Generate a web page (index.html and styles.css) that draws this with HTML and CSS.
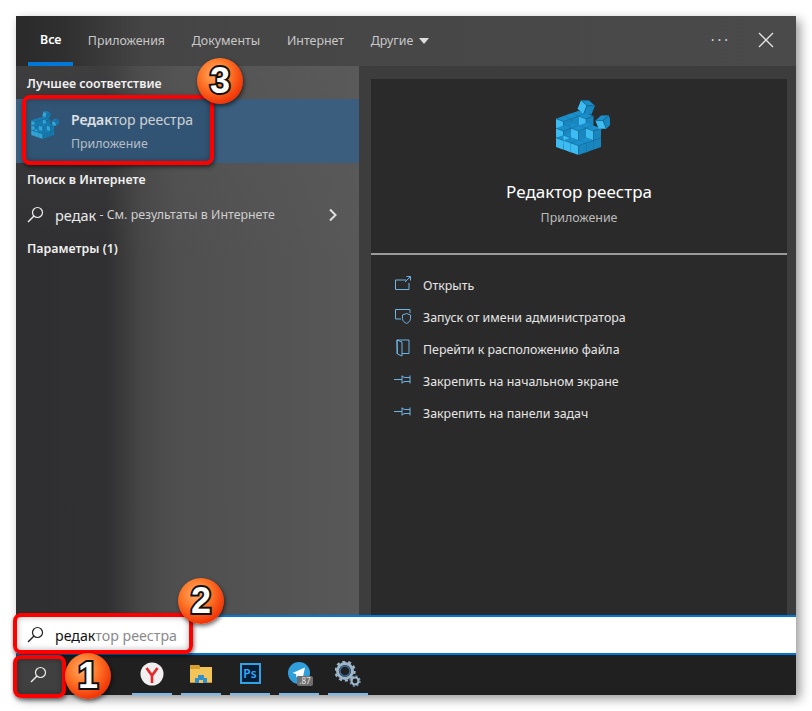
FILE: index.html
```html
<!DOCTYPE html>
<html lang="ru">
<head>
<meta charset="utf-8">
<title>Поиск</title>
<link rel="stylesheet" href="styles.css">
</head>
<body>
<svg class="defs" width="0" height="0" aria-hidden="true">
  <defs>
    <g id="cube">
      <polygon points="0,-2.8 7.5,0 0,2.8 -7.5,0" fill="#1b8fcb"/>
      <polygon points="-7.5,0 0,2.8 0,12.1 -7.5,9.3" fill="#3dbcf2"/>
      <polygon points="7.5,0 0,2.8 0,12.1 7.5,9.3" fill="#1a86bf"/>
      <path d="M-7.5 0 0 2.8 7.5 0M0 2.8V12.1" fill="none" stroke="#0d5f8c" stroke-width=".6"/>
    </g>
    <g id="reg">
      <use href="#cube" x="22.5" y="15.5"/>
      <use href="#cube" x="30" y="18.1"/><use href="#cube" x="15" y="18.1"/>
      <use href="#cube" x="15" y="27.6"/><use href="#cube" x="30" y="27.6"/>
      <use href="#cube" x="7.5" y="20.7"/><use href="#cube" x="7.5" y="30.2"/><use href="#cube" x="7.5" y="39.7"/>
      <use href="#cube" x="15" y="37.1"/><use href="#cube" x="30" y="37.1"/>
      <use href="#cube" x="37.5" y="39.7"/><use href="#cube" x="37.5" y="30.2"/>
      <use href="#cube" x="22.5" y="39.7"/><use href="#cube" x="22.5" y="30.2"/>
      <use href="#cube" x="30" y="42.3"/><use href="#cube" x="15" y="42.3"/>
      <use href="#cube" x="22.5" y="44.9"/>
      <use href="#cube" transform="translate(32 5) rotate(22)"/>
      <use href="#cube" transform="translate(46 20) rotate(-22) scale(.95)"/>
    </g>
    <g id="lens">
      <circle cx="10.5" cy="6.5" r="5" fill="none" stroke="currentColor" stroke-width="1.2"/>
      <path d="M7 10 1 16" stroke="currentColor" stroke-width="1.4" fill="none"/>
    </g>
    <g id="pin">
      <path d="M0 8.5H8M8 4.5V12.5M8 5.5 11 6.5H16M8 11.5 11 10.5H16M16 4.5V12.5" fill="none" stroke="#6fb4e6" stroke-width="1"/>
    </g>
  </defs>
</svg>

<main class="window">
  <nav class="tabs">
    <a class="tab active">Все</a>
    <a class="tab">Приложения</a>
    <a class="tab">Документы</a>
    <a class="tab">Интернет</a>
    <a class="tab">Другие <span class="caret"></span></a>
    <span class="tabs-right">
      <span class="more">···</span>
      <svg class="close" width="16" height="16" viewBox="0 0 16 16"><path d="M1 1 15 15M15 1 1 15" stroke="#e4e4e4" stroke-width="1.3" fill="none"/></svg>
    </span>
  </nav>

  <div class="content">
    <section class="results">
      <h2 class="group first">Лучшее соответствие</h2>
      <div class="best">
        <svg class="best-icon" width="28" height="30" viewBox="0 0 54 59"><use href="#reg"/></svg>
        <div class="best-text">
          <div class="best-title"><b>Редак</b>тор реестра</div>
          <div class="best-sub">Приложение</div>
        </div>
      </div>
      <h2 class="group">Поиск в Интернете</h2>
      <div class="web">
        <svg class="web-lens" width="18" height="18" viewBox="0 0 18 18"><use href="#lens"/></svg>
        <span class="web-q">редак</span><span class="web-hint">&nbsp;- См. результаты в Интернете</span>
        <svg class="chev" width="10" height="14" viewBox="0 0 10 14"><path d="M2 1.5 7.5 7 2 12.5" stroke="#e0e0e0" stroke-width="2" fill="none"/></svg>
      </div>
      <h2 class="group params">Параметры (1)</h2>
    </section>

    <section class="side">
      <div class="card">
        <div class="hero">
          <svg class="hero-icon" width="54" height="59" viewBox="0 0 54 59"><use href="#reg"/></svg>
          <div class="hero-title">Редактор реестра</div>
          <div class="hero-sub">Приложение</div>
        </div>
        <ul class="actions">
          <li class="action">
            <svg width="18" height="18" viewBox="0 0 18 18"><path d="M12 5H1.5V14.5H15V8M11 7 16 2M12.5 1.5H16.5V5.5" fill="none" stroke="#6fb4e6"/></svg>
            Открыть
          </li>
          <li class="action">
            <svg width="18" height="18" viewBox="0 0 18 18"><path d="M7 12H1.5V2.5H16V6" fill="none" stroke="#6fb4e6"/><path d="M8.5 8 12.5 6.5 16.5 8V11.5C16.5 14 14.5 15.5 12.5 16.5 10.5 15.5 8.5 14 8.5 11.5Z" fill="none" stroke="#6fb4e6"/></svg>
            Запуск от имени администратора
          </li>
          <li class="action">
            <svg width="18" height="18" viewBox="0 0 18 18"><path d="M3 1H15V14.5H8M3 1 8 3V17L3.5 15ZM3 1V15" fill="none" stroke="#6fb4e6"/></svg>
            Перейти к расположению файла
          </li>
          <li class="action">
            <svg width="18" height="18" viewBox="0 0 18 18"><use href="#pin"/></svg>
            Закрепить на начальном экране
          </li>
          <li class="action">
            <svg width="18" height="18" viewBox="0 0 18 18"><use href="#pin"/></svg>
            Закрепить на панели задач
          </li>
        </ul>
      </div>
    </section>
  </div>

  <div class="searchbar">
    <svg class="search-lens" width="18" height="18" viewBox="0 0 18 18"><use href="#lens"/></svg>
    <span class="typed">редак</span><span class="suggest">тор реестра</span>
  </div>

  <footer class="taskbar">
    <div class="start">
      <svg width="18" height="18" viewBox="0 0 18 18"><use href="#lens"/></svg>
    </div>
    <div class="apps">
      <div class="app">
        <svg width="24" height="26" viewBox="0 0 24 24"><circle cx="12" cy="12" r="11.5" fill="#f1efef"/><path d="M6.5 6 12 13.5 17.5 6M12 13V21" stroke="#e8262a" stroke-width="2.6" fill="none"/></svg>
      </div>
      <div class="app">
        <svg width="22" height="24" viewBox="0 0 22 22"><path d="M0 2H9L10 4H22V20H0Z" fill="#f3c457"/><path d="M0 2H9L10 4V6H0Z" fill="#d99f2e"/><path d="M5 20V15H8V12H14V15H17V20H13V17H9V20Z" fill="#2e8fd0"/><path d="M0 19H5V20H0ZM17 19H22V20H17Z" fill="#c9962c"/></svg>
      </div>
      <div class="app">
        <div class="ps">Ps</div>
      </div>
      <div class="app">
        <div class="tg">
          <svg width="22" height="22" viewBox="0 0 22 22"><circle cx="11" cy="11" r="11" fill="#2f9edb"/><path d="M4.5 11 17 5.5 14.5 17 10.5 13.5 8.5 15.5 8 12Z" fill="#fff"/></svg>
          <span class="tg-badge">.87</span>
        </div>
      </div>
      <div class="app">
        <svg class="gear" width="26" height="26" viewBox="0 0 26 26">
          <circle cx="10" cy="10" r="7.5" fill="none" stroke="#9fb6c8" stroke-width="3"/>
          <circle cx="10" cy="10" r="9.5" fill="none" stroke="#9fb6c8" stroke-width="2.4" stroke-dasharray="3 2.97"/>
          <circle cx="10" cy="10" r="5" fill="none" stroke="#3f6f9a" stroke-width="1.4"/>
          <circle cx="20" cy="20" r="3.5" fill="none" stroke="#9fb6c8" stroke-width="2.2"/>
          <circle cx="20" cy="20" r="5" fill="none" stroke="#7ea0bb" stroke-width="1.4" stroke-dasharray="2 1.93"/>
        </svg>
      </div>
    </div>
  </footer>

  <div class="mark mark-best"></div>
  <div class="mark mark-search"></div>
  <div class="mark mark-start"></div>
  <div class="badge badge-3">3</div>
  <div class="badge badge-2">2</div>
  <div class="badge badge-1">1</div>
</main>
</body>
</html>
```

FILE: styles.css
```css
* { box-sizing: border-box; }
html, body { margin: 0; height: 100%; background: #fff; }
body { font-family: "Noto Sans", "Open Sans", sans-serif; font-size: 12.4px; overflow: hidden; }
.defs { position: absolute; }

.window {
  position: relative;
  margin: 16px 0 0 16px;
  width: 780px;
  height: 679px;
  display: flex;
  flex-direction: column;
  box-shadow: 4px 4px 10px rgba(0, 0, 0, .4);
}

/* tabs */
.tabs {
  height: 50px;
  flex: none;
  display: flex;
  align-items: stretch;
  padding-left: 12px;
  background: linear-gradient(90deg, #2a2a2a 0, #303030 50px, #454545 130px, #4a4a4a 100%);
  color: #c8c8c8;
}
.tab {
  display: flex;
  align-items: center;
  padding: 0 13.4px 1px;
  white-space: nowrap;
}
.tab.active { color: #fff; font-weight: 600; padding: 0 12px; margin-right: 1px; border-bottom: 4px solid #0078d7; }
.caret {
  display: inline-block;
  width: 0; height: 0;
  margin-left: 6px;
  border-left: 5.5px solid transparent;
  border-right: 5.5px solid transparent;
  border-top: 6px solid #ddd;
}
.tabs-right { margin-left: auto; display: flex; align-items: center; gap: 27px; padding: 0 22px 2px 0; color: #d8d8d8; }
.more { font-size: 14px; letter-spacing: 3px; line-height: 1; }
.close { display: block; }

/* main */
.content { flex: 1; display: flex; min-height: 0; }
.results {
  width: 343px;
  flex: none;
  color: #fff;
  padding-top: 8px;
  background:
    linear-gradient(180deg, rgba(95, 95, 95, .3) 0, rgba(95, 95, 95, 0) 190px),
    linear-gradient(90deg, #2f2f31 0, #303032 90px, #464646 125px, #4f4f4f 160px, #585858 100%);
}
.group {
  margin: 0 0 0 11px;
  font-size: 12.4px;
  font-weight: 600;
  line-height: 20px;
  color: #f0f0f0;
}
.group.first { margin-bottom: 5px; }
.best {
  height: 64px;
  background: #3b5e7e;
  display: flex;
  align-items: flex-start;
  padding: 11px 0 0 15px;
  margin-bottom: 7px;
}
.best-icon { flex: none; margin-right: 12px; }
.best-title { font-size: 14px; line-height: 20px; color: #eee; }
.best-title b { font-weight: 600; color: #fff; }
.best-sub { font-size: 12.4px; line-height: 20px; color: #d2d8de; margin-top: 4px; }
.web { height: 49px; display: flex; align-items: center; padding: 0 0 0 11px; color: #e8e8e8; position: relative; }
.web-lens { color: #eee; margin-right: 10px; flex: none; }
.web-q { font-size: 14.5px; }
.web-hint { font-size: 12.4px; color: #cfcfcf; }
.chev { position: absolute; left: 312px; top: 18px; }
.params { margin-top: 0; }

.side { flex: 1; background: #3d3d3d; padding: 13px 9px 0 12px; min-width: 0; }
.card { height: 100%; background: #2a2a2a; color: #eee; }
.hero { height: 176px; border-bottom: 2px solid #9b9b9b; display: flex; flex-direction: column; align-items: center; padding-top: 19px; }
.hero-icon { display: block; margin-left: 8px; }
.hero-title { font-size: 17px; line-height: 24px; margin-top: 23px; color: #fff; }
.hero-sub { font-size: 12.4px; line-height: 20px; margin-top: 4px; color: #bcbcbc; }
.actions { list-style: none; margin: 0; padding: 14px 0 0 23px; }
.action { height: 32px; display: flex; align-items: center; gap: 11px; color: #e6e6e6; white-space: nowrap; }
.action svg { flex: none; margin-top: -2px; }

/* search bar */
.searchbar {
  height: 40px;
  flex: none;
  background: #fff;
  border-top: 2px solid #0078d7;
  border-bottom: 2px solid #0078d7;
  display: flex;
  align-items: center;
  padding-left: 11px;
  font-size: 14.2px;
  color: #111;
}
.search-lens { color: #222; margin-right: 10px; }
.suggest { color: #8a8a8a; }

/* taskbar */
.taskbar { height: 40px; flex: none; background: #202020; display: flex; }
.start { width: 46px; background: #404040; display: flex; align-items: center; justify-content: center; color: #eee; }
.start svg { display: block; }
.apps { display: flex; gap: 9px; padding-left: 70px; }
.app { width: 40px; height: 40px; border-bottom: 2px solid #76b9ed; display: flex; align-items: center; justify-content: center; padding-bottom: 1px; }
.ps {
  width: 21px; height: 21px;
  background: #001e36;
  border: 2px solid #2fa3e6;
  color: #31a8ff;
  font-size: 12px;
  font-weight: 600;
  line-height: 17px;
  text-align: center;
}
.tg { position: relative; width: 22px; height: 22px; margin-top: -2px; }
.tg svg { display: block; }
.tg-badge {
  position: absolute;
  left: 9px; top: 14px;
  width: 16px; height: 10px;
  background: #6e6e6e;
  border-radius: 2px;
  color: #e8e8e8;
  font-size: 8px;
  line-height: 10px;
  text-align: center;
}

/* annotations */
.mark {
  position: absolute;
  border: 4px solid #f00;
  box-shadow: 1px 2px 4px rgba(0, 0, 0, .55), inset 0 0 6px rgba(0, 0, 0, .3);
  border-radius: 8px;
}
.mark-best { left: 6px; top: 79px; width: 192px; height: 70px; background: rgba(0, 30, 60, .14); }
.mark-search { left: -3px; top: 597px; width: 180px; height: 41px; }
.mark-start { left: -3px; top: 639px; width: 53px; height: 43px; }

.badge {
  position: absolute;
  width: 46px;
  height: 46px;
  border-radius: 50%;
  background: radial-gradient(circle at 40% 35%, #ffb070 0, #ff7a2a 35%, #f23a0a 70%, #d81e00 100%);
  box-shadow: 1px 2px 4px rgba(0, 0, 0, .6);
  color: #fff;
  font-family: "Liberation Sans", Arial, sans-serif;
  font-size: 36px;
  font-weight: 700;
  line-height: 46px;
  text-align: center;
  -webkit-text-stroke: 4px #111;
  paint-order: stroke fill;
}
.badge-3 { left: 181px; top: 42px; }
.badge-2 { left: 162px; top: 562px; }
.badge-1 { left: 49px; top: 637px; }
```
